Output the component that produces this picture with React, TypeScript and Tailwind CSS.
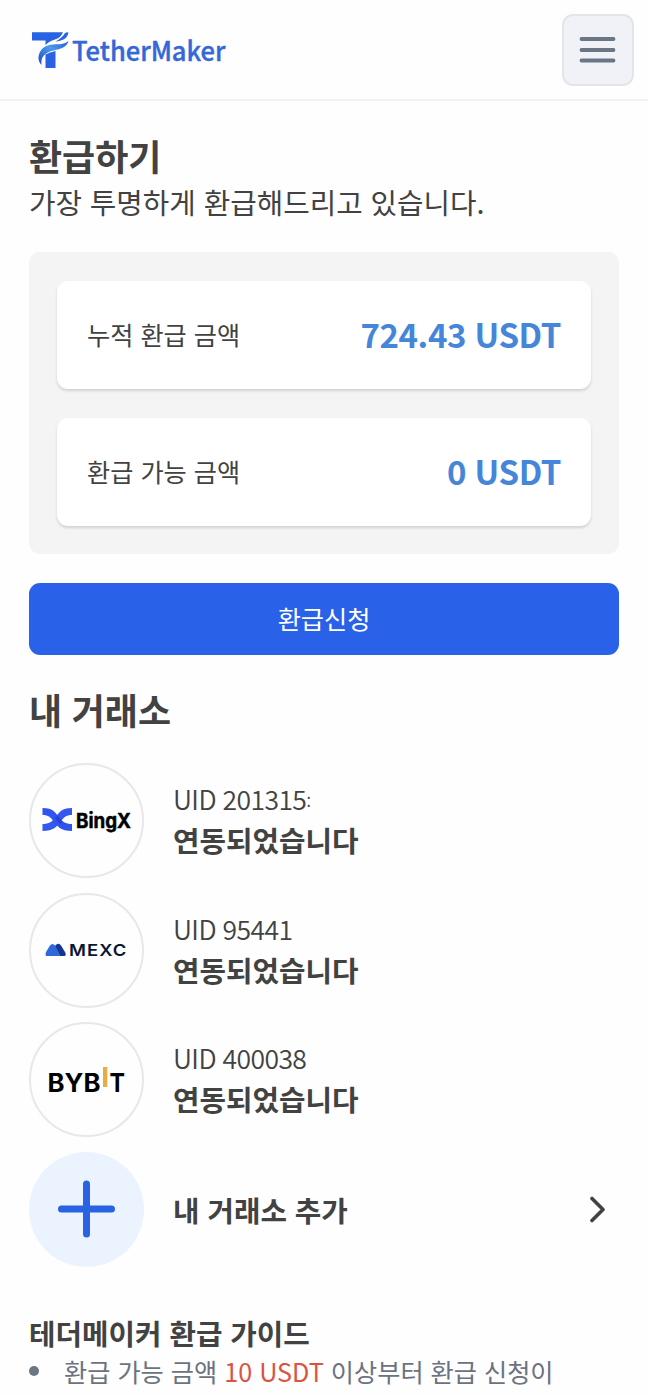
import React from "react";

interface Amount {
  label: string;
  value: string;
}

interface Exchange {
  id: string;
  uid: string;
  logo: React.ReactNode;
}

const Logo = () => (
  <svg width="210" height="44" viewBox="0 0 210 44" overflow="visible">
    <defs>
      <linearGradient id="wave" x1="0" y1="1" x2="1" y2="0">
        <stop offset="0" stopColor="#1d45c8" />
        <stop offset="0.55" stopColor="#4c9bea" />
        <stop offset="1" stopColor="#2358dc" />
      </linearGradient>
    </defs>
    <path d="M3 4.300H34C31.500 10 28 11 23 12.500Q19 14 16.500 17V12.500H3Z" fill="#2962e2" />
    <path d="M39.500 4.300C38.500 11 33 13 26.500 13.500C31 11 33.500 9 36 5Q37 4.300 39.500 4.300Z" fill="#2962e2" />
    <path d="M16.500 26.500Q21 24 26.500 23V40H16.500Z" fill="#2962e2" />
    <path
      d="M39.500 13C36 23 26 20.500 18 25C13 28 12 32 12.500 37C8 33 8.500 25 14 20C22 13.500 33 19 39.500 13Z"
      fill="url(#wave)"
    />
    <text
      x="43"
      y="33"
      textLength="153.500"
      lengthAdjust="spacingAndGlyphs"
      fontFamily="Noto Sans CJK KR"
      fontSize="26.500"
      fontWeight="500"
      fill="#3468d8"
      stroke="#3468d8"
      strokeWidth="0.400"
    >
      TetherMaker
    </text>
  </svg>
);

const BingX = () => (
  <svg width="90" height="34" viewBox="0 0 90 34" overflow="visible">
    <path
      d="M30 4C19 4 17 9 13.500 13C10.500 17.500 7 20 0.500 20V27C12 27 14.500 22.500 18.500 18C21.500 13.500 24 11 30 11Z"
      fill="#3558ef"
    />
    <path
      d="M0.500 4C11.500 4 13.500 9 17 13C20 17.500 23.500 20 30 20V27C18.500 27 16 22.500 12 18C9 13.500 6.500 11 0.500 11Z"
      fill="#2f55f0"
    />
    <path d="M13 14L15.500 11.500L20.500 18L18 20.500Z" fill="#2442d5" />
    <text
      x="34"
      y="23.500"
      textLength="55"
      lengthAdjust="spacingAndGlyphs"
      fontFamily="Inter"
      fontSize="20.500"
      fontWeight="700"
      stroke="#000"
      strokeWidth="0.500"
    >
      BingX
    </text>
  </svg>
);

const Mexc = () => (
  <svg width="84" height="24" viewBox="0 0 84 24" overflow="visible">
    <path
      d="M1 18Q0 16 1 14L5 7.500Q7.500 4.500 10 7.500L15 18H3Q2 18 1 18Z"
      fill="#2e68da"
    />
    <path d="M10 8L11.500 6.500Q14 4.500 16 7.500L20 14Q22 18 19 18H15Z" fill="#143692" />
    <text
      x="24"
      y="18"
      textLength="58.500"
      lengthAdjust="spacingAndGlyphs"
      letterSpacing="1"
      fontFamily="Inter"
      fontSize="16.500"
      fontWeight="600"
      fill="#091635"
    >
      MEXC
    </text>
  </svg>
);

const Bybit = () => (
  <svg width="80" height="36" viewBox="0 0 80 36" overflow="visible">
    <text
      x="0.500"
      y="30"
      textLength="53"
      lengthAdjust="spacingAndGlyphs"
      fontFamily="Inter"
      fontSize="25.500"
      fontWeight="700"
    >
      BYB
    </text>
    <rect x="56" y="5" width="4.300" height="20" fill="#e6ad42" />
    <text
      x="62.500"
      y="30"
      textLength="15.500"
      lengthAdjust="spacingAndGlyphs"
      fontFamily="Inter"
      fontSize="25.500"
      fontWeight="700"
    >
      T
    </text>
  </svg>
);

const amounts: Amount[] = [
  { label: "누적 환급 금액", value: "724.43 USDT" },
  { label: "환급 가능 금액", value: "0 USDT" },
];

const exchanges: Exchange[] = [
  { id: "bingx", uid: "201315", logo: <BingX /> },
  { id: "mexc", uid: "95441", logo: <Mexc /> },
  { id: "bybit", uid: "400038", logo: <Bybit /> },
];

const App = () => {
  return (
    <div className="relative h-[1395px] overflow-hidden bg-[#fefefe] text-[#424242] font-['Noto_Sans_CJK_KR',sans-serif] [word-spacing:1.4px]">
      <header className="flex h-[101px] items-start justify-between border-b-2 border-[#f0f2f4] pl-[29px] pr-[14px] pt-[14px]">
        <div className="pt-[14px]">
          <Logo />
        </div>
        <button className="flex h-[72px] w-[72px] items-center justify-center rounded-[11px] border-2 border-[#e4e5e9] bg-[#f0f2f8]">
          <svg width="38" height="28" viewBox="0 0 38 28">
            <path
              d="M2.500 3H34.500M2.500 14H34.500M2.500 24.500H34.500"
              stroke="#6b7685"
              strokeWidth="3.800"
              strokeLinecap="round"
            />
          </svg>
        </button>
      </header>

      <main className="px-[29px] pt-[29px]">
        <h1 className="text-[36px] font-bold leading-[50px]">환급하기</h1>
        <p className="whitespace-nowrap text-[28.800px] leading-[43px]">
          가장 투명하게 환급해드리고 있습니다.
        </p>

        <section className="mt-[29px] flex flex-col gap-[29px] rounded-[11px] bg-[#f4f4f4] px-[28px] pb-[28px] pt-[29px]">
          {amounts.map((amount) => (
            <div
              key={amount.label}
              className="flex h-[108px] items-center justify-between rounded-[11px] bg-white px-[30px] shadow-[0_2px_3px_rgba(0,0,0,0.14)]"
            >
              <span className="text-[25.200px]">{amount.label}</span>
              <span className="text-[33px] font-bold tracking-[-0.4px] text-[#4586d8]">
                {amount.value}
              </span>
            </div>
          ))}
        </section>

        <button className="mt-[29px] h-[72px] w-full rounded-[11px] bg-[#2962e8] text-[25.200px] text-white">
          환급신청
        </button>

        <h2 className="mt-[29px] text-[36px] font-bold leading-[50px]">
          내 거래소
        </h2>

        <div className="mt-[29px] flex flex-col gap-[14.500px]">
          {exchanges.map((exchange) => (
            <div key={exchange.id} className="flex items-center gap-[29px]">
              <div className="flex h-[115px] w-[115px] items-center justify-center rounded-full border-2 border-[#e8e8e8]">
                {exchange.logo}
              </div>
              <div className="pb-[1px]">
                <p className="flex whitespace-nowrap text-[26.500px] font-[350] leading-[40px] tracking-[-0.6px]">
                  UID {exchange.uid}
                  {exchange.id === "bingx" && (
                    <span className="text-[20px] font-light">:</span>
                  )}
                </p>
                <p className="text-[28.800px] font-bold leading-[42px]">
                  연동되었습니다
                </p>
              </div>
            </div>
          ))}
          <div className="flex items-center gap-[29px]">
            <div className="flex h-[115px] w-[115px] items-center justify-center rounded-full bg-[#eaf3fe]">
              <svg width="58" height="58" viewBox="0 0 58 58">
                <path
                  d="M28.500 4V54M3.500 29H53.500"
                  stroke="#2962e2"
                  strokeWidth="7"
                  strokeLinecap="round"
                />
              </svg>
            </div>
            <p className="flex-1 pt-[2px] text-[28.800px] font-bold">
              내 거래소 추가
            </p>
            <svg
              className="mr-[12px]"
              width="18"
              height="28"
              viewBox="0 0 18 28"
              fill="none"
            >
              <path
                d="M3 3.500L14 14.500L3 25.500"
                stroke="#424242"
                strokeWidth="3.600"
                strokeLinecap="round"
                strokeLinejoin="round"
              />
            </svg>
          </div>
        </div>

        <h3 className="mt-[45px] text-[28.800px] font-bold leading-[42px]">
          테더메이커 환급 가이드
        </h3>
        <ul>
          <li className="flex items-center whitespace-nowrap text-[25.200px] leading-[34px] text-[#6b7280]">
            <span className="mr-[25px] h-[10px] w-[10px] rounded-full bg-[#6b7685]" />
            <p>
              환급 가능 금액 <span className="text-[#d95442]">10 USDT</span>{" "}
              이상부터 환급 신청이
            </p>
          </li>
        </ul>
      </main>
    </div>
  );
};

export default App;
